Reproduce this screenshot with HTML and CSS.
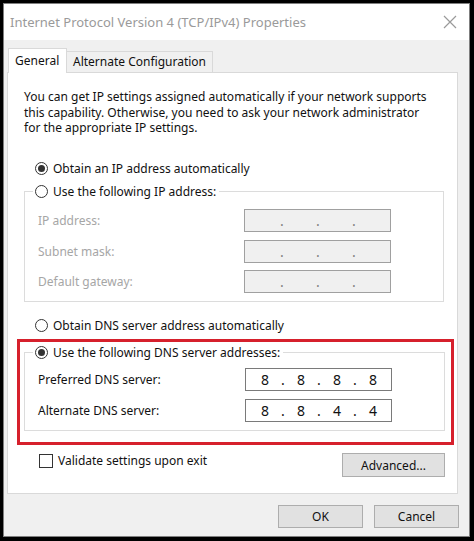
FILE: index.html
```html
<!DOCTYPE html>
<html lang="en">
<head>
  <meta charset="UTF-8">
  <title>Internet Protocol Version 4 (TCP/IPv4) Properties</title>
  <link rel="stylesheet" href="styles.css">
</head>
<body>
  <div class="window">
    <div class="titlebar">
      <span class="title">Internet Protocol Version 4 (TCP/IPv4) Properties</span>
      <svg class="close" width="14" height="14" viewBox="0 0 14 14">
        <path d="M1 1 L13 13 M13 1 L1 13" stroke="#9a9a9a" stroke-width="1.2" fill="none"/>
      </svg>
    </div>
    <div class="content">
      <div class="tabs">
        <div class="tab active">General</div>
        <div class="tab">Alternate Configuration</div>
      </div>
      <div class="panel">
        <p class="intro">You can get IP settings assigned automatically if your network supports<br>this capability. Otherwise, you need to ask your network administrator<br>for the appropriate IP settings.</p>

        <div class="option"><span class="radio checked"></span>Obtain an IP address automatically</div>
        <fieldset class="group">
          <legend class="option"><span class="radio"></span>Use the following IP address:</legend>
          <div class="field disabled">
            <span class="label">IP address:</span>
            <span class="ip"><b></b><i>.</i><b></b><i>.</i><b></b><i>.</i><b></b></span>
          </div>
          <div class="field disabled">
            <span class="label">Subnet mask:</span>
            <span class="ip"><b></b><i>.</i><b></b><i>.</i><b></b><i>.</i><b></b></span>
          </div>
          <div class="field disabled">
            <span class="label">Default gateway:</span>
            <span class="ip"><b></b><i>.</i><b></b><i>.</i><b></b><i>.</i><b></b></span>
          </div>
        </fieldset>

        <div class="option dns-auto"><span class="radio"></span>Obtain DNS server address automatically</div>
        <div class="highlight">
          <fieldset class="group dns">
            <legend class="option"><span class="radio checked"></span>Use the following DNS server addresses:</legend>
            <div class="field">
              <span class="label">Preferred DNS server:</span>
              <span class="ip"><b>8</b><i>.</i><b>8</b><i>.</i><b>8</b><i>.</i><b>8</b></span>
            </div>
            <div class="field">
              <span class="label">Alternate DNS server:</span>
              <span class="ip"><b>8</b><i>.</i><b>8</b><i>.</i><b>4</b><i>.</i><b>4</b></span>
            </div>
          </fieldset>
        </div>

        <div class="bottom-row">
          <div class="check"><span class="checkbox"></span>Validate settings upon exit</div>
          <button class="btn advanced">Advanced...</button>
        </div>
      </div>
      <div class="footer">
        <button class="btn">OK</button>
        <button class="btn">Cancel</button>
      </div>
    </div>
  </div>
</body>
</html>
```

FILE: styles.css
```css
body {
  margin: 0;
  background-color: #000000;
  font-family: "Noto Sans", sans-serif;
  font-size: 12px;
  color: #111;
}
.window {
  box-sizing: border-box;
  width: 467px;
  height: 534px;
  margin: 3px 0 0 3px;
  border: 1px solid #7f7f7f;
  background-color: #f0f0f0;
}
.titlebar {
  height: 36px;
  background-color: #ffffff;
  display: flex;
  align-items: center;
  justify-content: space-between;
  padding: 0 12px 0 6px;
}
.title {
  font-size: 13px;
  color: #9a9a9a;
}
.close {
  margin-top: -1px;
}
.content {
  padding: 8px 11px 0 3px;
}
.tabs {
  display: flex;
  align-items: flex-end;
  height: 24px;
}
.tab {
  box-sizing: border-box;
  height: 21px;
  padding: 0 6px;
  border: 1px solid #d9d9d9;
  border-bottom: none;
  line-height: 20px;
  background-color: #f0f0f0;
}
.tab.active {
  position: relative;
  z-index: 1;
  height: 25px;
  margin-bottom: -1px;
  margin-left: 1px;
  width: 59px;
  line-height: 23px;
  background-color: #ffffff;
}
.tab.active + .tab {
  border-left: none;
}
.panel {
  border: 1px solid #d9d9d9;
  background-color: #ffffff;
  padding: 16px 13px 16px 16px;
}
.intro {
  margin: 0;
  line-height: 15.5px;
  white-space: nowrap;
}
.option {
  display: flex;
  align-items: center;
  height: 23px;
  margin-top: 21px;
  padding-left: 11px;
  white-space: nowrap;
}
.radio {
  box-sizing: border-box;
  width: 13px;
  height: 13px;
  margin-right: 5px;
  border: 1px solid #333;
  border-radius: 50%;
  display: flex;
  align-items: center;
  justify-content: center;
}
.radio.checked::after {
  content: "";
  width: 7px;
  height: 7px;
  border-radius: 50%;
  background-color: #333;
}
.group {
  margin: 0;
  min-width: 0;
  border: 1px solid #dcdcdc;
  padding: 6.5px 52px 7.5px 13px;
  display: flex;
  flex-direction: column;
  gap: 7.5px;
}
.group legend.option {
  margin-top: 0;
  margin-left: -5px;
  padding: 0 3px 0 2px;
}
.field {
  display: flex;
  align-items: center;
  justify-content: space-between;
  height: 23px;
}
.field.disabled .label {
  color: #a6a6a6;
}
.ip {
  box-sizing: border-box;
  width: 147px;
  height: 23px;
  border: 1px solid #7a7a7a;
  padding: 0 5px;
  display: grid;
  grid-template-columns: 28px 8px 28px 8px 28px 8px 28px;
  align-items: center;
  background-color: #ffffff;
  font-size: 14px;
}
.ip b, .ip i {
  font-weight: normal;
  font-style: normal;
  text-align: center;
}
.field.disabled .ip {
  border-color: #a0a0a0;
  background-color: #f0f0f0;
  color: #808080;
}
.dns-auto {
  margin-top: 12px;
}
.highlight {
  margin: 2.5px -10px 0 -7px;
  border: 3px solid #d6202c;
  padding: 0 6px 11.5px 4px;
}
.group.dns {
  margin-top: -1.5px;
  padding-top: 4.5px;
  gap: 8px;
}
.bottom-row {
  display: flex;
  justify-content: space-between;
  align-items: flex-start;
  margin-top: 8px;
  padding-left: 15px;
}
.check {
  display: flex;
  align-items: center;
  height: 15px;
}
.checkbox {
  box-sizing: border-box;
  width: 14px;
  height: 14px;
  border: 1px solid #333;
  margin-right: 5px;
}
.btn {
  box-sizing: border-box;
  height: 23px;
  width: 85px;
  border: 1px solid #adadad;
  background-color: #e1e1e1;
  font-family: "Noto Sans", sans-serif;
  font-size: 12px;
  color: #111;
  padding: 0;
}
.btn.advanced {
  width: 103px;
  height: 24px;
  margin-right: -1px;
}
.footer {
  display: flex;
  justify-content: flex-end;
  gap: 11px;
  margin-top: 11px;
  margin-right: -1px;
}
```
